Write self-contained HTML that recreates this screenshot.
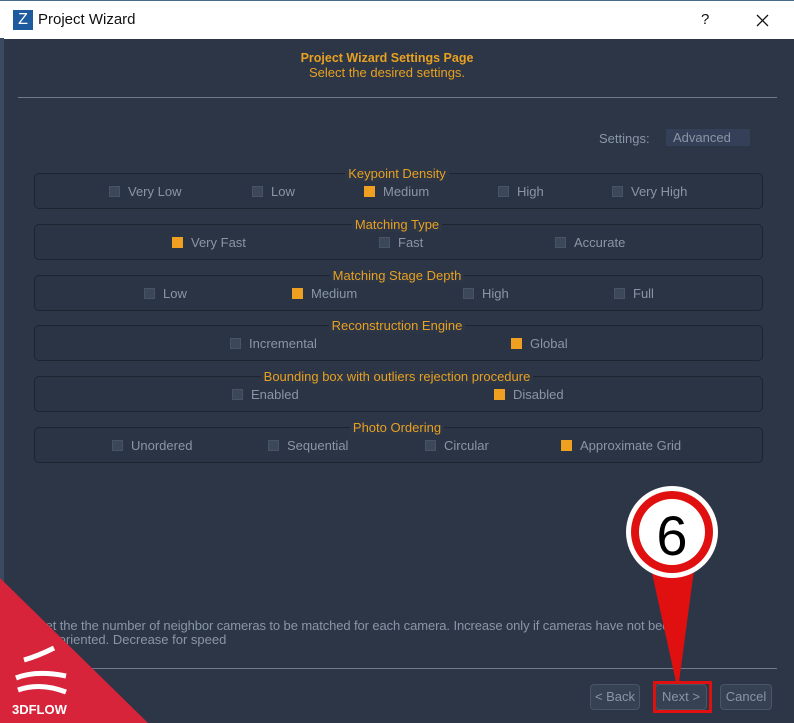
<!DOCTYPE html>
<html><head><style>
body{margin:0;width:794px;height:723px;overflow:hidden;background:#2c3647;font-family:"Liberation Sans",sans-serif;position:relative}
.t{position:absolute;white-space:nowrap}
.title{position:absolute;left:0;top:0;width:794px;height:38px;background:#fff;border-top:1px solid #4a6a8a}
.box{position:absolute;left:34px;width:727px;height:34px;border:1px solid #1d2430;border-radius:5px;background:#2a3444}
.lbl{position:absolute;left:0;width:794px;text-align:center;font-size:13px}
.lbl span{color:#e8a020;background:#2c3647;padding:0 3px}
.opt{position:absolute;color:#8a95a5;font-size:13px;white-space:nowrap}
.opt i{display:inline-block;width:9px;height:9px;background:#3c4758;border:1px solid #475366;margin-right:8px;vertical-align:-1px}
.opt i.on{background:#f0a020;border-color:#f0a020}
.btn{position:absolute;top:684px;height:24px;border:1px solid #4a5566;border-radius:4px;background:#364154;color:#8a95a5;font-size:13px;text-align:center;line-height:24px}
</style></head><body>
<div class="title">
<div style="position:absolute;left:13px;top:9px;width:20px;height:20px;background:#1e5a9e;color:#fff;font-size:16px;text-align:center;line-height:20px">Z</div>
<div class="t" style="left:38px;top:10px;font-size:15px;color:#111">Project Wizard</div>
<div class="t" style="left:701px;top:10px;font-size:15px;color:#111">?</div>
<svg style="position:absolute;left:756px;top:13px" width="13" height="13"><path d="M1 1L12 12M12 1L1 12" stroke="#111" stroke-width="1.3"/></svg>
</div>
<div style="position:absolute;left:0;top:38px;width:4px;height:685px;background:#3a4a60"></div>
<div class="t" style="left:0;width:774px;text-align:center;top:51px;color:#e8a020;font-size:12.5px;font-weight:bold">Project Wizard Settings Page</div>
<div class="t" style="left:0;width:774px;text-align:center;top:65px;color:#e8a020;font-size:13px">Select the desired settings.</div>
<div style="position:absolute;left:18px;top:97px;width:759px;height:1px;background:#6f7a8a"></div>
<div class="t" style="left:599px;top:131px;color:#8a95a5;font-size:13px">Settings:</div>
<div class="t" style="left:666px;top:129px;width:77px;height:17px;background:#344058;color:#8a95a5;font-size:13px;padding-left:7px;line-height:17px">Advanced</div>

<div class="box" style="top:173px"></div><div class="lbl" style="top:166px"><span>Keypoint Density</span></div>
<div class="opt" style="left:109px;top:184px"><i></i>Very Low</div>
<div class="opt" style="left:252px;top:184px"><i></i>Low</div>
<div class="opt" style="left:364px;top:184px"><i class="on"></i>Medium</div>
<div class="opt" style="left:498px;top:184px"><i></i>High</div>
<div class="opt" style="left:612px;top:184px"><i></i>Very High</div>

<div class="box" style="top:224px"></div><div class="lbl" style="top:217px"><span>Matching Type</span></div>
<div class="opt" style="left:172px;top:235px"><i class="on"></i>Very Fast</div>
<div class="opt" style="left:379px;top:235px"><i></i>Fast</div>
<div class="opt" style="left:555px;top:235px"><i></i>Accurate</div>

<div class="box" style="top:275px"></div><div class="lbl" style="top:268px"><span>Matching Stage Depth</span></div>
<div class="opt" style="left:144px;top:286px"><i></i>Low</div>
<div class="opt" style="left:292px;top:286px"><i class="on"></i>Medium</div>
<div class="opt" style="left:463px;top:286px"><i></i>High</div>
<div class="opt" style="left:614px;top:286px"><i></i>Full</div>

<div class="box" style="top:325px"></div><div class="lbl" style="top:318px"><span>Reconstruction Engine</span></div>
<div class="opt" style="left:230px;top:336px"><i></i>Incremental</div>
<div class="opt" style="left:511px;top:336px"><i class="on"></i>Global</div>

<div class="box" style="top:376px"></div><div class="lbl" style="top:369px"><span>Bounding box with outliers rejection procedure</span></div>
<div class="opt" style="left:232px;top:387px"><i></i>Enabled</div>
<div class="opt" style="left:494px;top:387px"><i class="on"></i>Disabled</div>

<div class="box" style="top:427px"></div><div class="lbl" style="top:420px"><span>Photo Ordering</span></div>
<div class="opt" style="left:112px;top:438px"><i></i>Unordered</div>
<div class="opt" style="left:268px;top:438px"><i></i>Sequential</div>
<div class="opt" style="left:425px;top:438px"><i></i>Circular</div>
<div class="opt" style="left:561px;top:438px"><i class="on"></i>Approximate Grid</div>

<div class="t" style="left:37px;top:618px;color:#8a95a5;font-size:13px;letter-spacing:-0.1px">Set the the number of neighbor cameras to be matched for each camera. Increase only if cameras have not been</div>
<div class="t" style="left:37px;top:632px;color:#8a95a5;font-size:13px">not oriented. Decrease for speed</div>
<div style="position:absolute;left:18px;top:668px;width:759px;height:1px;background:#6f7a8a"></div>
<div class="btn" style="left:590px;width:48px">&lt; Back</div>
<div class="btn" style="left:655px;width:50px">Next &gt;</div>
<div class="btn" style="left:720px;width:50px">Cancel</div>
<div style="position:absolute;left:653px;top:681px;width:53px;height:26px;border:3px solid #e01010"></div>

<svg style="position:absolute;left:0;top:0" width="794" height="723">
<polygon points="0,578 0,723 148,723" fill="#d8243a"/>
<path d="M24 660 q14 -4 30 -12 M16 678 q20 -8 50 -2 M18 690 q22 -8 48 2" stroke="#fff" stroke-width="5" fill="none"/>
<text x="12" y="714" fill="#fff" font-size="13" font-family="Liberation Sans" font-weight="bold">3DFLOW</text>
<polygon points="648,555 696,555 679,682 676,682" fill="#e01010"/>
<circle cx="672" cy="532" r="46" fill="#fff"/>
<circle cx="672" cy="532" r="41" fill="#e01010"/>
<circle cx="672" cy="532" r="33" fill="#fff"/>
<text x="672" y="555" text-anchor="middle" font-size="56" font-family="Liberation Sans" fill="#000">6</text>
</svg>
</body></html>
